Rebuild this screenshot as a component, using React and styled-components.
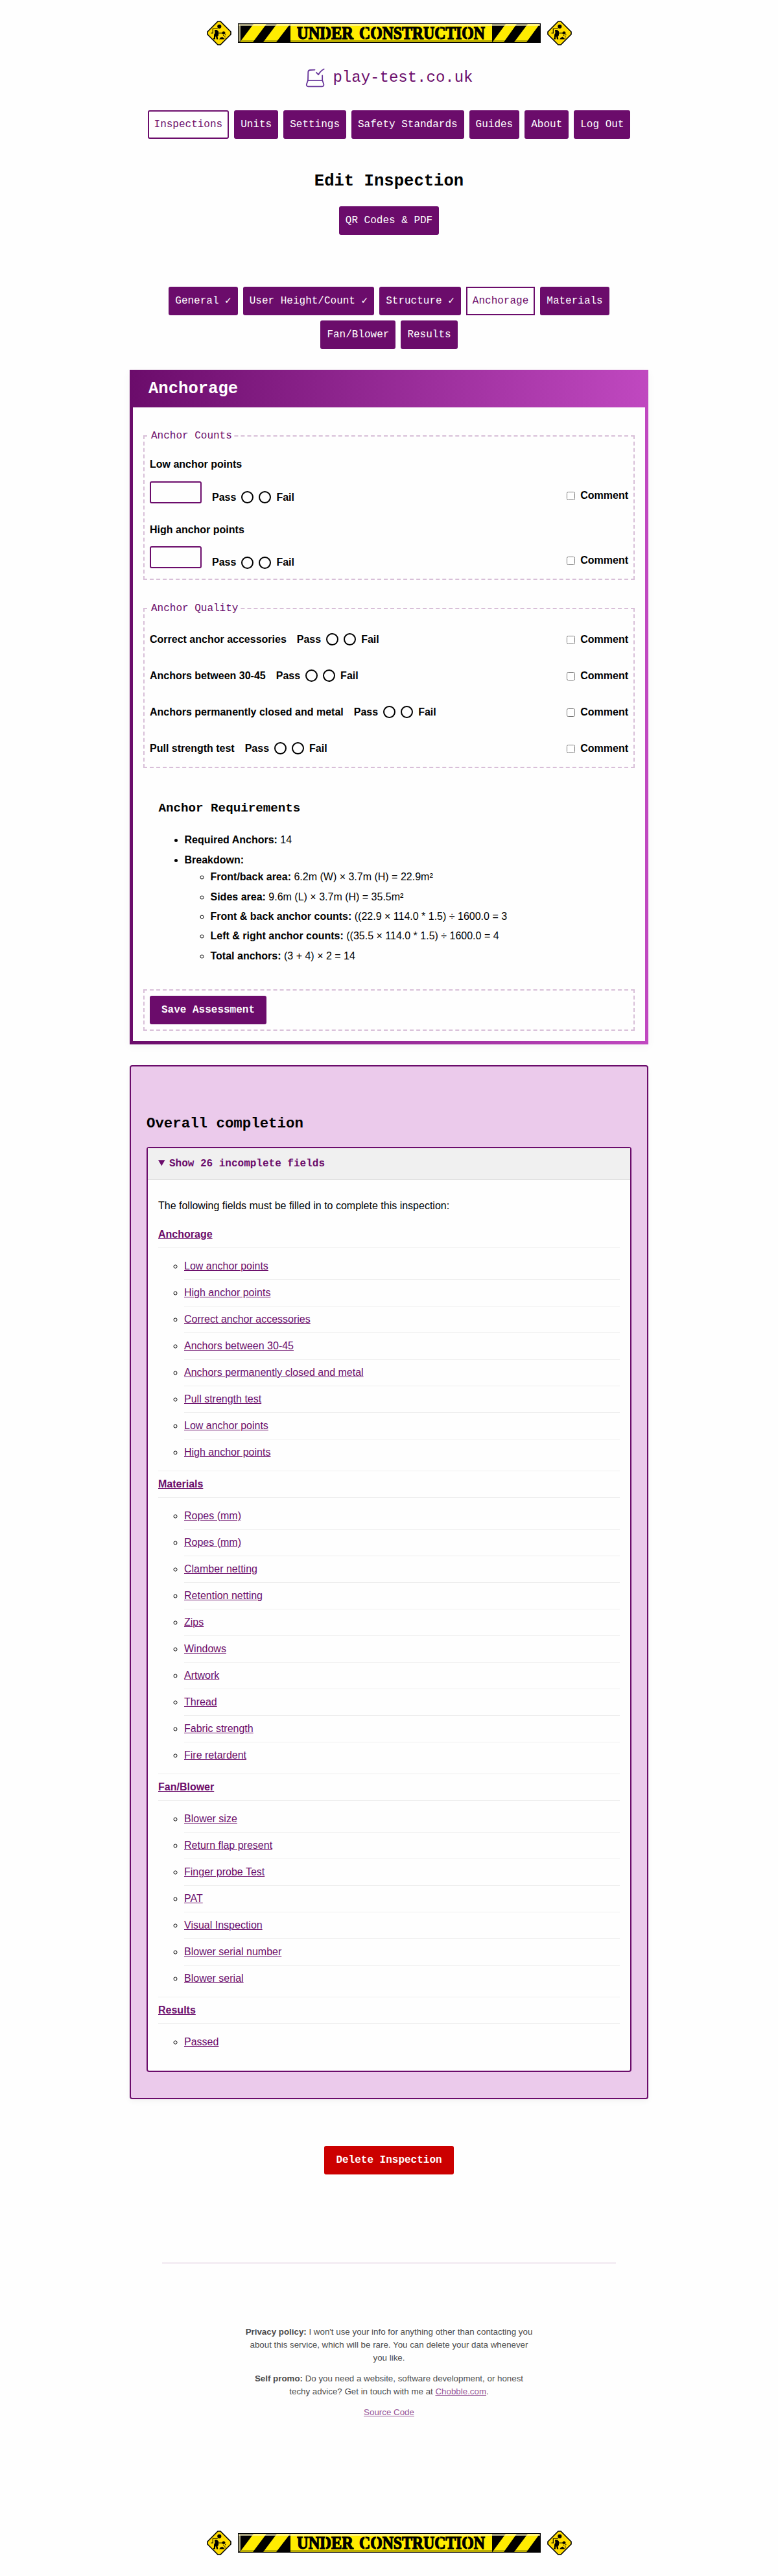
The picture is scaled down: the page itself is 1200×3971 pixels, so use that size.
import React from 'react';
import styled, { createGlobalStyle, css } from 'styled-components';

const sans = '"Liberation Sans", Arial, sans-serif';
const mono = '"Liberation Mono", "Courier New", monospace';
const purple = '#6b0c6b';
const pink = '#c048c0';
const thistle = '#d8bfd8';

const GlobalStyle = createGlobalStyle`
  *, *::before, *::after { box-sizing: border-box; }
  body {
    margin: 0;
    background: #fefefe;
    color: #000;
    font: 16px/24px ${sans};
  }
  h1, h2, h3, p, ul { margin: 0; }
`;

const Page = styled.div`
  display: flex;
  flex-direction: column;
  align-items: center;
  padding: 32px 0;
`;

const BannerRow = styled.div`
  display: flex;
  align-items: center;
  justify-content: center;
  gap: 10px;
  height: 38px;
  svg { display: block; flex: none; }
`;

const Brand = styled.a`
  display: flex;
  align-items: center;
  gap: 11px;
  height: 32px;
  margin-top: 34px;
  color: ${purple};
  font: 24px/32px ${mono};
  svg { display: block; }
`;

const TabBar = styled.nav`
  display: flex;
  flex-wrap: wrap;
  justify-content: center;
  gap: 8px;
  width: ${(p) => p.$width}px;
  margin-top: ${(p) => p.$top}px;
`;

const Tab = styled.a`
  padding: 8px;
  border: 2px solid ${purple};
  border-radius: ${(p) => (p.$square ? 0 : 3)}px;
  background: ${(p) => (p.$active ? '#fefefe' : purple)};
  color: ${(p) => (p.$active ? purple : '#fff')};
  font: 16px/24px ${mono};
  white-space: nowrap;
`;

const PageTitle = styled.h1`
  margin-top: 48px;
  font: bold 25.6px/36px ${mono};
`;

const Card = styled.section`
  width: 800px;
  margin-top: 32px;
  border: 5px solid ${purple};
  border-top: 0;
  border-image: linear-gradient(90deg, ${purple}, ${pink}) 1;
  box-shadow: 0 4px 12px rgba(0, 0, 0, 0.04);
`;

const CardHeader = styled.h2`
  height: 58px;
  margin: 0 -5px;
  padding: 10px 29px;
  background: linear-gradient(90deg, ${purple}, ${pink});
  color: #fff;
  font: bold 25.6px/40px ${mono};
`;

const CardBody = styled.div`
  padding: 32px 16px 16px;
`;

const Group = styled.fieldset`
  margin: 0 0 32px;
  min-width: 0;
  padding: ${(p) => p.$top || 8}px 8px ${(p) => p.$bottom || 8}px;
  border: 2px dashed ${thistle};
  ${(p) => p.$plain && css`margin: 0;`}
`;

const Legend = styled.legend`
  padding: 0 2px;
  color: ${purple};
  font: 16px/24px ${mono};
`;

const FieldLabel = styled.div`
  font-weight: bold;
  margin-bottom: 13.6px;
`;

const NumberBlock = styled.div`
  & + & { margin-top: 28.800px; }
`;

const NumberRow = styled.div`
  display: flex;
  align-items: flex-end;
  height: 34px;
`;

const NumberInput = styled.input`
  width: 80px;
  height: 34px;
  margin: 0 16px 0 0;
  padding: 4px;
  border: 2px solid ${purple};
  border-radius: 3px;
  background: #fefefe;
`;

const CheckRow = styled.div`
  display: flex;
  align-items: center;
  height: 40px;
  font-weight: bold;
  & + & { margin-top: 16px; }
  > span { margin-right: 16px; }
`;

const Choices = styled.div`
  display: flex;
  align-items: center;
  gap: 8px;
  font-weight: bold;
  margin-bottom: ${(p) => p.$drop || 0}px;
`;

const Radio = styled.input`
  appearance: none;
  width: 19px;
  height: 19px;
  margin: 0 0 ${(p) => p.$lift || 0}px;
  border: 2px solid #000;
  border-radius: 50%;
`;

const CommentToggle = styled.label`
  display: flex;
  align-items: center;
  gap: 8px;
  margin-left: auto;
  font-weight: bold;
  input { width: 13px; height: 13px; margin: 1px 0 0; }
`;

const Requirements = styled.div`
  padding: 16px 23.500px 0;
  h3 { font: bold 19.2px/28px ${mono}; }
`;

const Bullets = styled.ul`
  padding-left: 40px;
  list-style: ${(p) => (p.$nested ? 'circle' : 'disc')};
  margin-top: ${(p) => (p.$nested ? 2.5 : 23)}px;
  li + li { margin-top: 6.4px; }
`;

const SaveArea = styled.div`
  margin-top: 39px;
`;

const ActionButton = styled.button`
  display: block;
  padding: 8px 16px;
  border: 2px solid ${(p) => (p.$danger ? '#c00' : purple)};
  border-radius: 3px;
  background: ${(p) => (p.$danger ? '#c00' : purple)};
  color: #fff;
  font: bold 16px/24px ${mono};
`;

const Summary = styled.section`
  width: 800px;
  margin-top: 32px;
  padding: 72px 24px 40px;
  border: 2px solid ${purple};
  border-radius: 4px;
  background: #ebcaeb;
  box-shadow: 0 4px 8px rgba(0, 0, 0, 0.04);
  h2 { font: bold 22.4px/32px ${mono}; margin-bottom: 20px; }
`;

const Details = styled.details`
  border: 2px solid ${purple};
  border-radius: 4px;
  background: #fefefe;
  summary {
    padding: 12px 16px;
    border-bottom: 1px solid #ddd;
    background: #f0f0f0;
    color: ${purple};
    font: bold 16px/24px ${mono};
  }
`;

const DetailsBody = styled.div`
  padding: 28px 16px 16px;
  > p { margin-bottom: 12px; }
`;

const Section = styled.div`
  & + & { border-top: 1px solid #eee; }
`;

const SectionHead = styled.div`
  padding: 8px 0;
  border-bottom: 1px solid #eee;
  a { font-weight: bold; }
`;

const MissingList = styled.ul`
  padding: 8px 0 8px 40px;
  list-style: circle;
  li { padding: 8px 0; }
  li + li { border-top: 1px solid #eee; }
`;

const Link = styled.a`
  color: ${(p) => (p.$soft ? '#975597' : purple)};
  text-decoration: underline;
`;

const DeleteRow = styled.div`
  margin-top: 72px;
`;

const Footer = styled.footer`
  display: flex;
  flex-direction: column;
  align-items: center;
  gap: 12px;
  width: 700px;
  height: 349px;
  margin: 136px 0 64px;
  padding-top: 96px;
  border-top: 1px solid #d3b6d3;
  color: #4c4c4c;
  font-size: 13.33px;
  line-height: 20px;
  text-align: center;
  p { max-width: 446px; }
`;

const Digger = () => (
  <svg width="38" height="38" viewBox="0 0 38 38">
    <path d="M17 1h4L37 17v4L21 37h-4L1 21v-4z" fill="#ffdc00" stroke="#000" strokeWidth="1.6" />
    <circle cx="19.3" cy="8.800" r="3.100" />
    <path d="M6.500 19H10M9.300 19v-6.700h7.500M15 19h9" fill="none" stroke="#000" strokeWidth="1.100" />
    <path d="M12 14h3.500l2.500 2.500v6l-1.500 1.500.8 4.500H15l-1-4.500-1 1v3.500h-3V27h.8l.4-6 1.300-2z" />
    <path d="M23 19l1.800-2.400h2.400l1.600 2.400-1.600 1.800h-2.400z" />
    <path d="M19 28.500l2.500-3h1.300l.8-1 1.400 1.500h.8l1.500 2.500z" />
    <path d="M25 21.700h1.300V23H25zM27.200 23.500h1.200v1.200h-1.200zM28.200 21h1.200v1.200h-1.200zM27.600 26h1.200v1.300h-1.200z" />
  </svg>
);

const lettering = {
  fontFamily: '"Liberation Serif", "Times New Roman", serif',
  fontWeight: 'bold',
  fontSize: 27,
  stroke: '#000',
  strokeWidth: 1.3,
  lengthAdjust: 'spacingAndGlyphs',
};

// Centre lines of the round letters, cut open for the stencil look.
const cuts = [502, 563, 580.5, 678.5, 721.5];

const Tape = () => (
  <svg width="467" height="30" viewBox="367 36 467 30">
    <rect x="367" y="36" width="467" height="30" fill="#000" />
    <rect x="448" y="37" width="311" height="28" fill="#ffec00" />
    <path
      fill="#ffec00"
      d="M370 65L391 37H411L390 65zM406 65L427 37H447.500L426 65zM759.500 65L780 37H797L777 65zM793 65L814 37H832.500L812 65z"
    />
    <rect x="368" y="37" width="465" height="3" fill="#fff8c0" opacity="0.65" />
    <path d="M368 37l3 3v23l-3 2z" fill="#fff8c0" opacity="0.65" />
    <rect x="371" y="62" width="462" height="3" fill="#000" opacity="0.26" />
    <text x="458" y="60" textLength="87" {...lettering}>UNDER</text>
    <text x="554" y="60" textLength="194" {...lettering}>CONSTRUCTION</text>
    {cuts.map((x) => (
      <rect key={x} x={x - 0.6} y="41" width="1.2" height="20" fill="#ffec00" />
    ))}
  </svg>
);

const Banner = () => (
  <BannerRow>
    <Digger />
    <Tape />
    <Digger />
  </BannerRow>
);

const LogoMark = () => (
  <svg width="32" height="32" viewBox="470 104 32 32" fill="none" stroke="#663399" strokeWidth="1.8" strokeLinecap="round" strokeLinejoin="round">
    <path d="M485.500 107.600L478 108q-2.600.3-2.700 3L475 123.800" />
    <path d="M497.200 116.500v7.300H475l-2.100 6q-.7 3.300 2.500 3.500h21.400q3.200-.2 2.500-3.500l-2.100-6" />
    <path d="M488 111.800l3.200 3.200q2.800-5.400 8.500-8.500" />
  </svg>
);

const mainTabs = ['Inspections', 'Units', 'Settings', 'Safety Standards', 'Guides', 'About', 'Log Out'];
const sectionTabs = ['General ✓', 'User Height/Count ✓', 'Structure ✓', 'Anchorage', 'Materials', 'Fan/Blower', 'Results'];
const counts = ['Low anchor points', 'High anchor points'];
const checks = ['Correct anchor accessories', 'Anchors between 30-45', 'Anchors permanently closed and metal', 'Pull strength test'];

const breakdown = [
  ['Front/back area:', '6.2m (W) × 3.7m (H) = 22.9m²'],
  ['Sides area:', '9.6m (L) × 3.7m (H) = 35.5m²'],
  ['Front & back anchor counts:', '((22.9 × 114.0 * 1.5) ÷ 1600.0 = 3'],
  ['Left & right anchor counts:', '((35.5 × 114.0 * 1.5) ÷ 1600.0 = 4'],
  ['Total anchors:', '(3 + 4) × 2 = 14'],
];

const incomplete = [
  ['Anchorage', ['Low anchor points', 'High anchor points', 'Correct anchor accessories', 'Anchors between 30-45', 'Anchors permanently closed and metal', 'Pull strength test', 'Low anchor points', 'High anchor points']],
  ['Materials', ['Ropes (mm)', 'Ropes (mm)', 'Clamber netting', 'Retention netting', 'Zips', 'Windows', 'Artwork', 'Thread', 'Fabric strength', 'Fire retardent']],
  ['Fan/Blower', ['Blower size', 'Return flap present', 'Finger probe Test', 'PAT', 'Visual Inspection', 'Blower serial number', 'Blower serial']],
  ['Results', ['Passed']],
];

const PassFail = ({ name, drop, lift }) => (
  <Choices $drop={drop}>
    Pass
    <Radio type="radio" name={name} $lift={lift} />
    <Radio type="radio" name={name} $lift={lift} />
    Fail
  </Choices>
);

const Comment = () => (
  <CommentToggle>
    <input type="checkbox" />
    Comment
  </CommentToggle>
);

export default function App() {
  return (
    <Page>
      <GlobalStyle />
      <Banner />
      <Brand>
        <LogoMark />
        play-test.co.uk
      </Brand>
      <TabBar $width={780} $top={34}>
        {mainTabs.map((t) => (
          <Tab key={t} $active={t === 'Inspections'}>{t}</Tab>
        ))}
      </TabBar>
      <PageTitle>Edit Inspection</PageTitle>
      <TabBar $width={700} $top={20}>
        <Tab>QR Codes &amp; PDF</Tab>
      </TabBar>
      <TabBar $width={700} $top={80}>
        {sectionTabs.map((t) => (
          <Tab key={t} $active={t === 'Anchorage'} $square={t === 'Anchorage'}>{t}</Tab>
        ))}
      </TabBar>

      <Card>
        <CardHeader>Anchorage</CardHeader>
        <CardBody>
          <Group $top={20.4} $bottom={16}>
            <Legend>Anchor Counts</Legend>
            {counts.map((c) => (
              <NumberBlock key={c}>
                <FieldLabel>{c}</FieldLabel>
                <NumberRow>
                  <NumberInput />
                  <PassFail name={c} drop={-3} />
                  <Comment />
                </NumberRow>
              </NumberBlock>
            ))}
          </Group>
          <Group $top={16}>
            <Legend>Anchor Quality</Legend>
            {checks.map((c) => (
              <CheckRow key={c}>
                <span>{c}</span>
                <PassFail name={c} lift={2} />
                <Comment />
              </CheckRow>
            ))}
          </Group>
          <Requirements>
            <h3>Anchor Requirements</h3>
            <Bullets>
              <li><b>Required Anchors:</b> 14</li>
              <li>
                <b>Breakdown:</b>
                <Bullets $nested>
                  {breakdown.map(([k, v]) => (
                    <li key={k}><b>{k}</b> {v}</li>
                  ))}
                </Bullets>
              </li>
            </Bullets>
          </Requirements>
          <SaveArea>
            <Group $plain>
              <ActionButton>Save Assessment</ActionButton>
            </Group>
          </SaveArea>
        </CardBody>
      </Card>

      <Summary>
        <h2>Overall completion</h2>
        <Details open>
          <summary>Show 26 incomplete fields</summary>
          <DetailsBody>
            <p>The following fields must be filled in to complete this inspection:</p>
            {incomplete.map(([title, fields]) => (
              <Section key={title}>
                <SectionHead><Link>{title}</Link></SectionHead>
                <MissingList>
                  {fields.map((f, i) => (
                    <li key={i}><Link>{f}</Link></li>
                  ))}
                </MissingList>
              </Section>
            ))}
          </DetailsBody>
        </Details>
      </Summary>

      <DeleteRow>
        <ActionButton $danger>Delete Inspection</ActionButton>
      </DeleteRow>

      <Footer>
        <p><b>Privacy policy:</b> I won't use your info for anything other than contacting you about this service, which will be rare. You can delete your data whenever you like.</p>
        <p><b>Self promo:</b> Do you need a website, software development, or honest techy advice? Get in touch with me at <Link $soft>Chobble.com</Link>.</p>
        <p><Link $soft>Source Code</Link></p>
      </Footer>
      <Banner />
    </Page>
  );
}
